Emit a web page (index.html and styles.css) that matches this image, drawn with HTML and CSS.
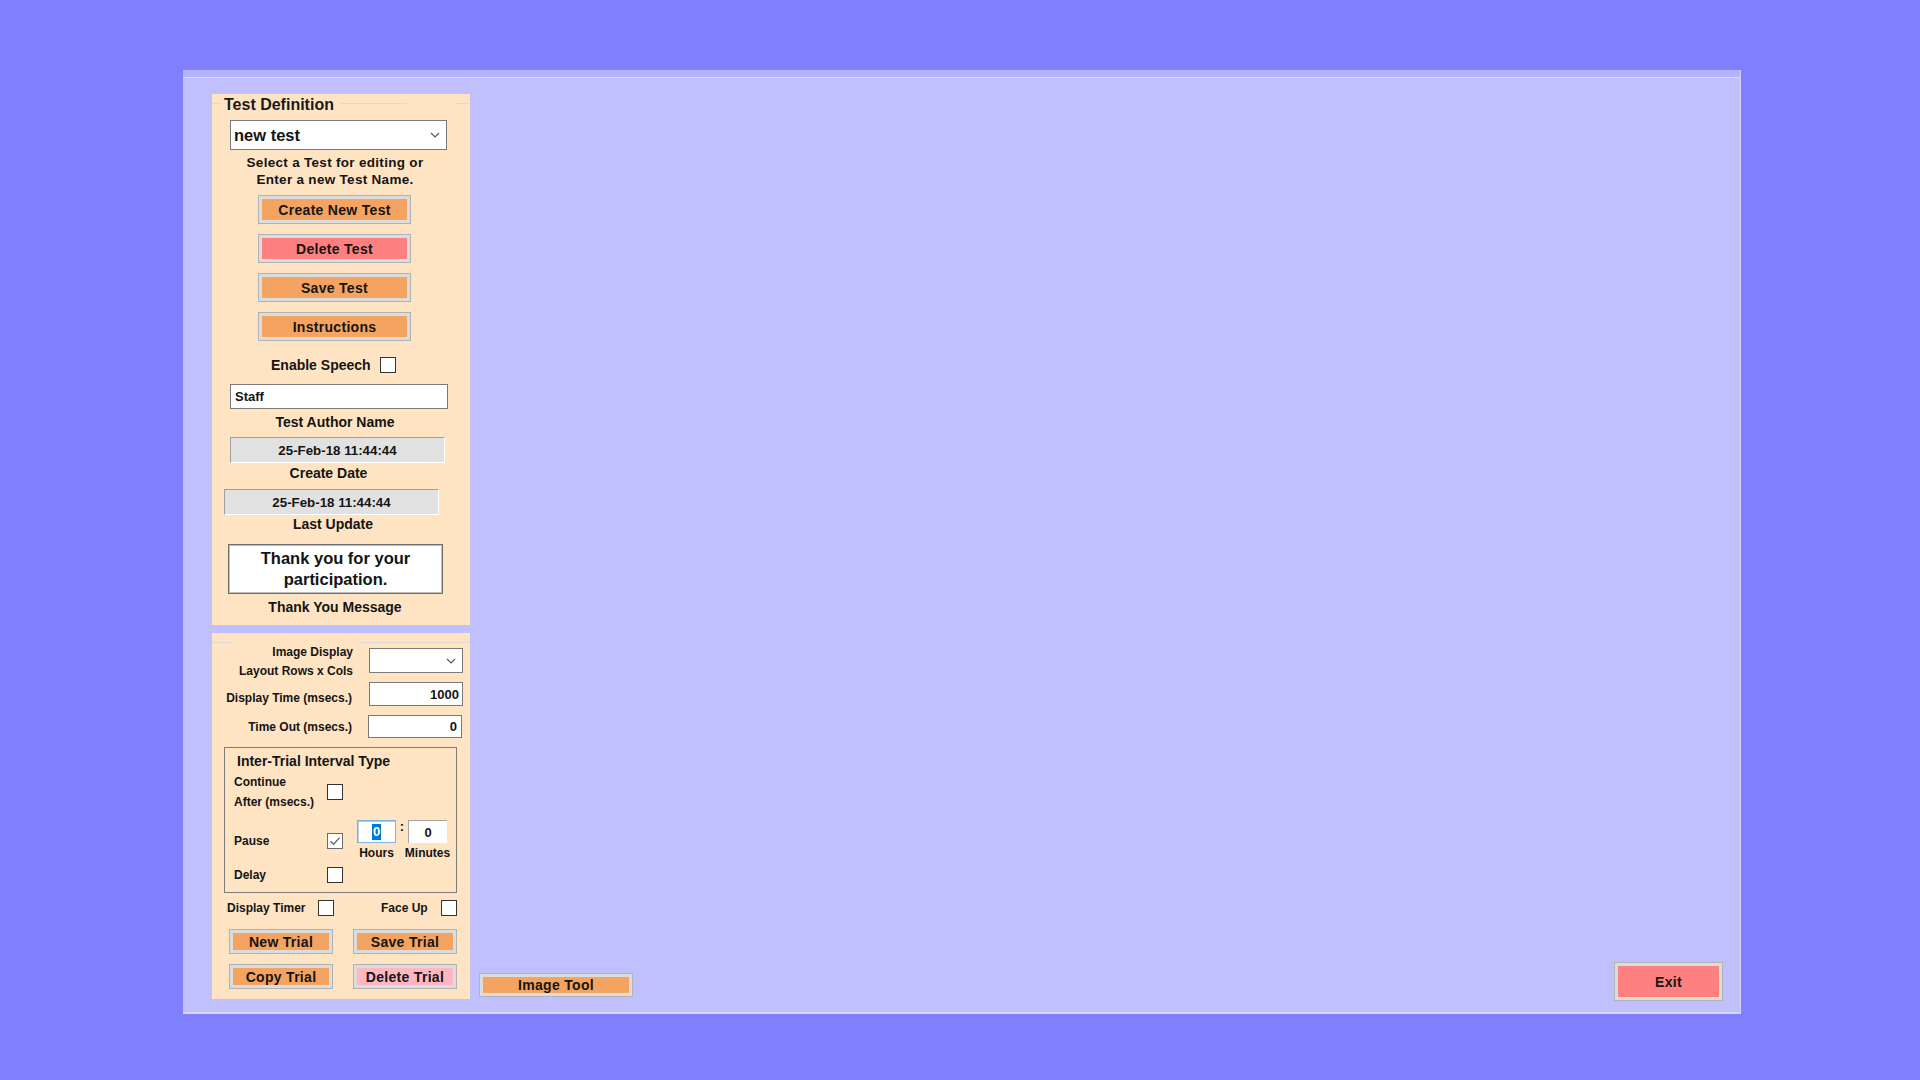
FILE: index.html
```html
<!DOCTYPE html>
<html>
<head>
<meta charset="utf-8">
<title>Test Definition</title>
<link rel="stylesheet" href="styles.css">
</head>
<body>
<div class="window">
  <div class="titlestrip"></div>
  <div class="client">
    <div class="leftcol">
      <section class="panel panel-def">
        <div class="gb-head">
          <span class="gb-line gb-l1"></span>
          <span class="gb-title">Test Definition</span>
          <span class="gb-line gb-l2"></span>
          <span class="gb-line gb-l3"></span>
        </div>
        <div class="combo combo-test">
          <span class="combo-text">new test</span>
          <svg class="chev" width="10" height="6" viewBox="0 0 10 6"><polyline points="1,1 5,5 9,1" fill="none" stroke="#5a5a5a" stroke-width="1.2"/></svg>
        </div>
        <p class="desc">Select a Test for editing or<br>Enter a new Test Name.</p>
        <div class="btn btn-def btn-first">Create New Test</div>
        <div class="btn btn-def btn-red">Delete Test</div>
        <div class="btn btn-def">Save Test</div>
        <div class="btn btn-def">Instructions</div>
        <div class="speech-row">
          <span class="lbl14">Enable Speech</span>
          <span class="chk"></span>
        </div>
        <div class="textbox staff">Staff</div>
        <div class="cap cap-author">Test Author Name</div>
        <div class="datebox date-create">25-Feb-18 11:44:44</div>
        <div class="cap cap-create">Create Date</div>
        <div class="datebox date-update">25-Feb-18 11:44:44</div>
        <div class="cap cap-update">Last Update</div>
        <div class="thanks">Thank you for your<br>participation.</div>
        <div class="cap cap-thanks">Thank You Message</div>
      </section>

      <section class="panel panel-trial">
        <div class="gb-line-row">
          <span class="gb-line gb-m1"></span>
          <span class="gb-line gb-m2"></span>
        </div>
        <div class="frow frow-1">
          <div class="lbl-r lbl-layout">Image Display<br>Layout Rows x Cols</div>
          <div class="combo combo-layout">
            <svg class="chev" width="10" height="6" viewBox="0 0 10 6"><polyline points="1,1 5,5 9,1" fill="none" stroke="#5a5a5a" stroke-width="1.2"/></svg>
          </div>
        </div>
        <div class="frow frow-2">
          <div class="lbl-r lbl-disp">Display Time (msecs.)</div>
          <div class="textbox num-r disp-box">1000</div>
        </div>
        <div class="frow frow-3">
          <div class="lbl-r lbl-out">Time Out (msecs.)</div>
          <div class="textbox num-r out-box">0</div>
        </div>

        <div class="itbox">
          <div class="it-title">Inter-Trial Interval Type</div>
          <div class="it-row it-continue">
            <div class="it-lbl it-lbl2">Continue<br>After (msecs.)</div>
            <span class="chk"></span>
          </div>
          <div class="it-row it-pause">
            <div class="it-lbl it-lbl1 it-pause-lbl">Pause</div>
            <span class="chk chk-checked it-pause-chk"><svg width="14" height="14" viewBox="0 0 14 14"><polyline points="2.5,7.2 5.6,10.2 11.6,3.6" fill="none" stroke="#6a6a6a" stroke-width="1.4"/></svg></span>
            <div class="timegrid">
              <div class="num num-focus"><span class="sel">0</span></div>
              <div class="colon">:</div>
              <div class="num num-plain">0</div>
              <div class="tlbl">Hours</div>
              <div></div>
              <div class="tlbl">Minutes</div>
            </div>
          </div>
          <div class="it-row it-delay">
            <div class="it-lbl it-lbl1">Delay</div>
            <span class="chk"></span>
          </div>
        </div>

        <div class="timer-row">
          <span class="lbl12 lbl-timer">Display Timer</span>
          <span class="chk"></span>
          <span class="lbl12 lbl-face">Face Up</span>
          <span class="chk"></span>
        </div>
        <div class="trial-btns trial-btns-1">
          <div class="btn btn-trial">New Trial</div>
          <div class="btn btn-trial">Save Trial</div>
        </div>
        <div class="trial-btns trial-btns-2">
          <div class="btn btn-trial">Copy Trial</div>
          <div class="btn btn-trial btn-pink">Delete Trial</div>
        </div>
      </section>
    </div>

    <div class="btn btn-imgtool">Image Tool</div>
    <div class="spacer"></div>
    <div class="btn btn-exit">Exit</div>
  </div>
</div>
</body>
</html>
```

FILE: styles.css
```css
* { box-sizing: border-box; margin: 0; padding: 0; }
html, body { width: 1920px; height: 1080px; overflow: hidden; }
body {
  background: #8080ff;
  font-family: "Liberation Sans", Arial, sans-serif;
  color: #141414;
}

.window {
  width: 1558px;
  height: 944px;
  margin: 70px 0 0 183px;
  background: #c0c0ff;
  border-right: 1px solid #d2d2f6;
  border-bottom: 2px solid #d6d6f2;
  display: flex;
  flex-direction: column;
}
.titlestrip {
  flex: none;
  height: 8px;
  background: #b3b3fd;
  border-bottom: 1px solid #dcdcd6;
}
.client {
  flex: 1;
  display: flex;
  padding: 16px 17px 13px 29px;
}
.leftcol {
  flex: none;
  width: 258px;
  display: flex;
  flex-direction: column;
  gap: 8px;
}
.spacer { flex: 1; }

.panel {
  background: #ffe4c4;
  display: flex;
  flex-direction: column;
  align-items: flex-start;
}
.panel-def { height: 531px; }
.panel-trial { height: 366px; padding-top: 9px; }

/* group box header lines */
.gb-head {
  display: flex;
  align-items: flex-start;
  width: 100%;
  height: 22px;
}
.gb-line { display: block; height: 1px; background: #dcdad6; }
.gb-head .gb-line { margin-top: 9px; }
.gb-l1 { width: 10px; }
.gb-title {
  width: 116px;
  margin-left: 2px;
  font-weight: bold;
  font-size: 16px;
  line-height: 22px;
  white-space: nowrap;
  color: #1a1a1a;
}
.gb-l2 { width: 67px; }
.gb-l3 { flex: 1; margin-left: 49px; }

.gb-line-row { display: flex; width: 100%; height: 1px; }
.gb-m1 { width: 20px; }
.gb-m2 { flex: 1; margin-left: 126px; }

/* combo boxes */
.combo {
  background: #fff;
  border: 1px solid #7a7a7a;
  display: flex;
  align-items: center;
  position: relative;
}
.combo .chev { position: absolute; right: 6px; top: 50%; margin-top: -3px; }
.combo-test {
  margin: 4px 0 0 18px;
  width: 217px;
  height: 30px;
  padding-left: 3px;
}
.combo-text { font-weight: bold; font-size: 16.5px; }
.combo-layout {
  margin: 5px 0 0 16px;
  width: 94px;
  height: 25px;
}

.desc {
  margin: 4px 0 0 12px;
  width: 222px;
  text-align: center;
  font-weight: bold;
  font-size: 13.5px;
  line-height: 17px;
  letter-spacing: 0.3px;
}

/* buttons */
.btn {
  flex: none;
  display: flex;
  align-items: center;
  justify-content: center;
  background: #f4a460;
  border: 1px solid #b2b2b2;
  box-shadow: inset 0 0 0 3px #dcdcdc;
  font-weight: bold;
  font-size: 14px;
  letter-spacing: 0.3px;
  white-space: nowrap;
}
.btn-def {
  margin: 10px 0 0 46px;
  width: 153px;
  height: 29px;
}
.btn-first { margin-top: 7px; }
.btn-red { background: #ff8080; }
.btn-pink { background: #ffb6c1; }

.speech-row {
  display: flex;
  align-items: center;
  margin: 16px 0 0 59px;
  height: 16px;
  gap: 9px;
}
.lbl14 { font-weight: bold; font-size: 14px; white-space: nowrap; }

.chk {
  flex: none;
  display: flex;
  align-items: center;
  justify-content: center;
  width: 16px;
  height: 16px;
  background: #fff;
  border: 1px solid #333;
}
.chk-checked { border-color: #6a6a6a; }

.textbox {
  background: #fff;
  border: 1px solid #7a7a7a;
  display: flex;
  align-items: center;
  font-weight: bold;
  font-size: 13px;
}
.staff {
  margin: 11px 0 0 18px;
  width: 218px;
  height: 25px;
  padding-left: 4px;
}

.cap {
  margin: 5px 0 0 12px;
  width: 222px;
  text-align: center;
  font-weight: bold;
  font-size: 14px;
  line-height: 16px;
  white-space: nowrap;
}
.cap-create { margin-top: 2px; width: 209px; }
.cap-update { margin-top: 1px; width: 218px; }

.datebox {
  width: 215px;
  height: 26px;
  background: #e1e1e1;
  border-top: 1px solid #a0a0a0;
  border-left: 1px solid #a0a0a0;
  border-right: 1px solid #fff;
  border-bottom: 1px solid #fff;
  display: flex;
  align-items: center;
  justify-content: center;
  font-weight: bold;
  font-size: 13.3px;
}
.date-create { margin: 7px 0 0 18px; }
.date-update { margin: 8px 0 0 12px; }

.thanks {
  margin: 12px 0 0 16px;
  width: 215px;
  height: 50px;
  background: #fff;
  border: 1px solid #707070;
  box-shadow: inset 0 0 0 1px #bdbdbd;
  display: flex;
  align-items: center;
  justify-content: center;
  text-align: center;
  font-weight: bold;
  font-size: 16.5px;
  line-height: 21px;
}

/* trial panel rows */
.frow { display: flex; align-items: flex-start; }
.frow-1 { height: 38px; }
.frow-2 { margin-top: 1px; height: 24px; }
.frow-3 { margin-top: 9px; height: 23px; }
.lbl-r {
  text-align: right;
  font-weight: bold;
  font-size: 12px;
  white-space: nowrap;
}
.lbl-layout { width: 141px; line-height: 19px; }
.lbl-disp { width: 140px; line-height: 24px; padding-top: 4px; }
.lbl-out { width: 140px; line-height: 23px; padding-top: 1px; }
.num-r { justify-content: flex-end; width: 94px; }
.disp-box { margin-left: 17px; height: 24px; padding-right: 3px; }
.out-box { margin-left: 16px; height: 23px; padding-right: 4px; }

.itbox {
  margin: 9px 0 0 12px;
  width: 233px;
  height: 146px;
  border: 1px solid #7c7c7c;
  padding-top: 4px;
  display: flex;
  flex-direction: column;
}
.it-title {
  margin-left: 12px;
  font-weight: bold;
  font-size: 14px;
  line-height: 18px;
  white-space: nowrap;
}
.it-row { display: flex; align-items: center; margin-left: 9px; }
.it-continue { margin-top: 2px; height: 40px; }
.it-pause { margin-top: 8px; height: 40px; align-items: flex-start; }
.it-delay { margin-top: 7px; height: 16px; }
.it-lbl {
  width: 93px;
  font-weight: bold;
  font-size: 12px;
  white-space: nowrap;
}
.it-lbl2 { line-height: 20px; }
.it-lbl1 { line-height: 16px; }
.it-pause-lbl, .it-pause-chk { margin-top: 13px; }

.timegrid {
  margin-left: 14px;
  display: grid;
  grid-template-columns: 39px 12px 39px;
  grid-template-rows: 23px 17px;
}
.num {
  width: 39px;
  height: 23px;
  background: #fff;
  display: flex;
  align-items: center;
  justify-content: center;
  font-weight: bold;
  font-size: 13px;
}
.num-focus { border: 1px solid #7cb2ea; box-shadow: inset 1px 1px 0 #a9ccf0; }
.num-plain { border-top: 1px solid #a4a4a4; border-left: 1px solid #a4a4a4; }
.sel {
  background: #0078d7;
  color: #fff;
  line-height: 16px;
  padding: 0 1px;
}
.colon {
  text-align: center;
  font-weight: bold;
  font-size: 13px;
  line-height: 14px;
}
.tlbl {
  justify-self: center;
  align-self: end;
  font-weight: bold;
  font-size: 12px;
  line-height: 14px;
  white-space: nowrap;
}

.timer-row {
  display: flex;
  align-items: center;
  margin: 7px 0 0 15px;
  height: 16px;
}
.lbl12 { font-weight: bold; font-size: 12px; white-space: nowrap; }
.lbl-timer { width: 91px; }
.lbl-face { width: 60px; margin-left: 47px; }

.trial-btns { display: flex; gap: 20px; margin-left: 17px; }
.trial-btns-1 { margin-top: 13px; }
.trial-btns-2 { margin-top: 10px; }
.btn-trial { width: 104px; height: 25px; }

.btn-imgtool {
  align-self: flex-end;
  margin: 0 0 2px 9px;
  width: 154px;
  height: 24px;
}
.btn-exit {
  align-self: flex-end;
  margin-bottom: -2px;
  width: 109px;
  height: 39px;
  background: #ff8080;
  font-size: 14px;
}
```
